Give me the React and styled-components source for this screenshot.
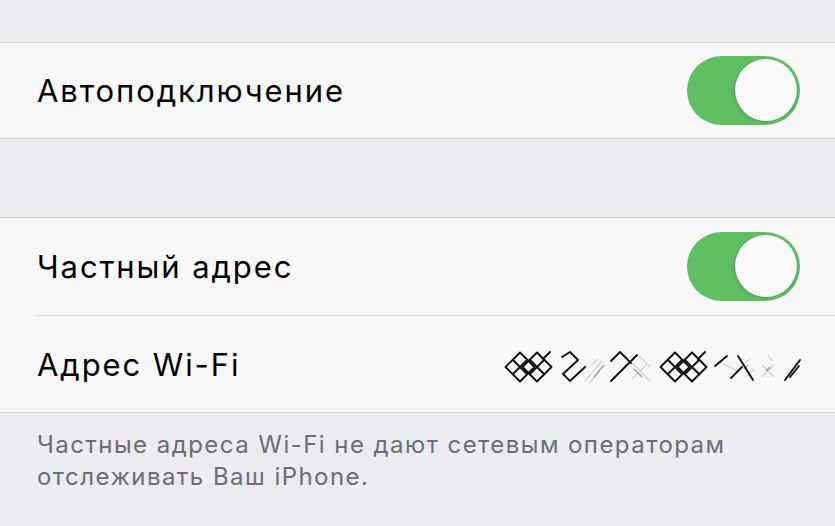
import React from "react";
import styled, { createGlobalStyle } from "styled-components";

const GlobalStyle = createGlobalStyle`
  html, body {
    margin: 0;
    padding: 0;
    background: #ebebf0;
  }
  body {
    font-family: Inter, "Noto Sans", sans-serif;
    -webkit-font-smoothing: antialiased;
  }
`;

const Page = styled.div`
  padding-top: 42px;
  min-height: 526px;
  box-sizing: border-box;
`;

const Group = styled.section`
  background: #f7f7f7;
  border-top: 1px solid #d0d0d4;
  border-bottom: 1px solid #d0d0d4;
  margin-bottom: ${(p) => (p.$gap ? "78px" : "0")};
`;

const Row = styled.div`
  padding-left: 37px;
`;

const RowInner = styled.div`
  box-sizing: border-box;
  height: ${(p) => p.$h || 97}px;
  display: flex;
  align-items: center;
  justify-content: space-between;
  padding-right: 35px;
  border-top: ${(p) => (p.$divider ? "1px solid #d6d6da" : "none")};
`;

const Label = styled.span`
  font-size: 31px;
  color: #000;
  letter-spacing: 1.9px;
`;

const Track = styled.div`
  width: 113px;
  height: 69px;
  border-radius: 35px;
  background: #5ebf62;
  position: relative;
  flex-shrink: 0;
`;

const Knob = styled.div`
  position: absolute;
  top: 3px;
  right: 3px;
  width: 62px;
  height: 62px;
  border-radius: 50%;
  background: #f9f9f9;
  box-shadow: 0 0 0 1px rgba(70, 140, 70, 0.35), -1px 1px 3px rgba(0, 0, 0, 0.12);
`;

const Masked = styled.svg`
  margin-top: 6px;
  margin-right: -2px;
  flex-shrink: 0;
`;

const Footer = styled.p`
  margin: 0;
  padding: 16px 37px 0;
  font-size: 24px;
  line-height: 32px;
  color: #6d6d72;
  letter-spacing: 1.45px;
`;

function Toggle() {
  return (
    <Track>
      <Knob />
    </Track>
  );
}

// 2x2 diamond grid, the scrambled digit look
const lattice = (cx, cy, r) => {
  const h = r / 2;
  return (
    `M${cx} ${cy - r} L${cx + r} ${cy} L${cx} ${cy + r} L${cx - r} ${cy} Z ` +
    `M${cx - h} ${cy - h} L${cx + h} ${cy + h} M${cx + h} ${cy - h} L${cx - h} ${cy + h}`
  );
};

function MaskedAddress() {
  return (
    <Masked width="300" height="36" viewBox="500 350 300 36">
      <g stroke="#ccc" strokeWidth="1.4" fill="none" opacity="0.85">
        <path d="M583 382 L600 362 M587 384 L598 372 M590 366 L596 360" />
        <path d="M628 362 L648 382 M630 380 L645 365 M636 356 L648 368" />
        <path d="M716 362 L735 372 M740 367 L748 360 M744 378 L752 370" />
        <path d="M760 366 L772 378 M760 378 L772 366 M766 356 L770 362" />
      </g>
      <g stroke="#9a9aa0" strokeWidth="1.2" fill="none">
        <path d="M592 378 L602 366" />
        <path d="M632 370 L640 378" />
        <path d="M742 370 L746 366 M764 372 L768 368" />
      </g>
      <g stroke="#111" strokeWidth="1.9" fill="none" strokeLinecap="round" strokeLinejoin="round">
        <path d={lattice(518, 368, 14.5)} />
        <path d={lattice(535, 368, 14.5)} />
        <path d="M541 360 L548 353" />
        <path d="M560 358 L568 353 L576 361 L561 375 L568 382 L583 368" />
        <path d="M609 362 L618 353 L629 364 M609 382 L635 356" />
        <path d={lattice(673, 368, 14.5)} />
        <path d={lattice(690, 368, 14.5)} />
        <path d="M696 360 L703 353" />
        <path d="M713 367 L725 357" />
        <path d="M736 357 L751 381 M729 379 L740 368" />
        <path d="M783 381 L798 361 M788 378 L797 367" />
      </g>
    </Masked>
  );
}

export default function App() {
  return (
    <>
      <GlobalStyle />
      <Page>
        <Group $gap>
          <Row>
            <RowInner $h={95}>
              <Label>Автоподключение</Label>
              <Toggle />
            </RowInner>
          </Row>
        </Group>
        <Group>
          <Row>
            <RowInner>
              <Label>Частный адрес</Label>
              <Toggle />
            </RowInner>
          </Row>
          <Row>
            <RowInner $divider>
              <Label>Адрес Wi-Fi</Label>
              <MaskedAddress />
            </RowInner>
          </Row>
        </Group>
        <Footer>
          Частные адреса Wi-Fi не дают сетевым операторам
          <br />
          отслеживать Ваш iPhone.
        </Footer>
      </Page>
    </>
  );
}
